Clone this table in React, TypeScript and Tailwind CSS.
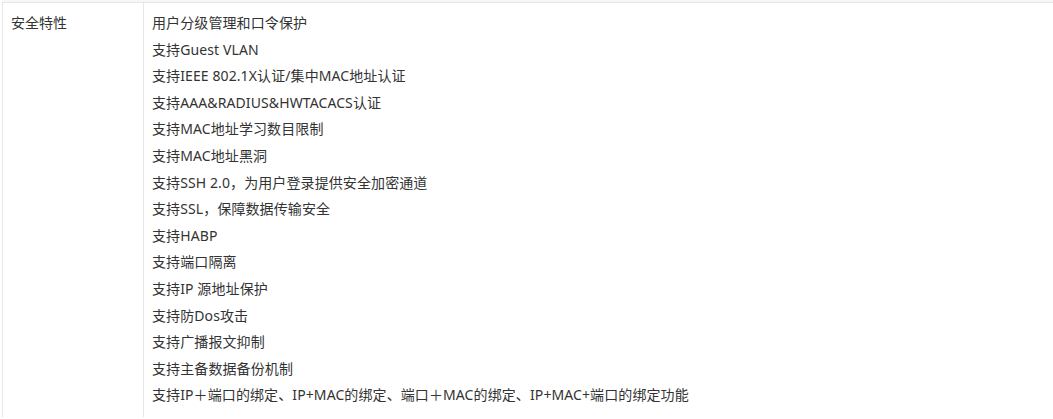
const items = [
  "用户分级管理和口令保护",
  "支持Guest VLAN",
  "支持IEEE 802.1X认证/集中MAC地址认证",
  "支持AAA&RADIUS&HWTACACS认证",
  "支持MAC地址学习数目限制",
  "支持MAC地址黑洞",
  "支持SSH 2.0，为用户登录提供安全加密通道",
  "支持SSL，保障数据传输安全",
  "支持HABP",
  "支持端口隔离",
  "支持IP 源地址保护",
  "支持防Dos攻击",
  "支持广播报文抑制",
  "支持主备数据备份机制",
  "支持IP＋端口的绑定、IP+MAC的绑定、端口＋MAC的绑定、IP+MAC+端口的绑定功能",
]

export default function App() {
  return (
    <div className="w-[1053px] h-[419px] overflow-hidden bg-white pl-[2px] text-[14px] text-[#333] font-['Noto_Sans','Noto_Sans_CJK_SC',sans-serif]">
      <div className="h-[2px] bg-[#f7f7f7]" />
      <div className="flex border-t border-l border-[#e6e6e6]">
        <div className="w-[141px] shrink-0 border-r border-[#e6e6e6] px-2 pt-[7px] leading-[26.6px]">安全特性</div>
        <div className="flex-1 px-2 pt-[7px] pb-2 leading-[26.6px] tracking-[0.1px]">
          {items.map((t) => (
            <p key={t}>{t}</p>
          ))}
        </div>
      </div>
    </div>
  )
}
